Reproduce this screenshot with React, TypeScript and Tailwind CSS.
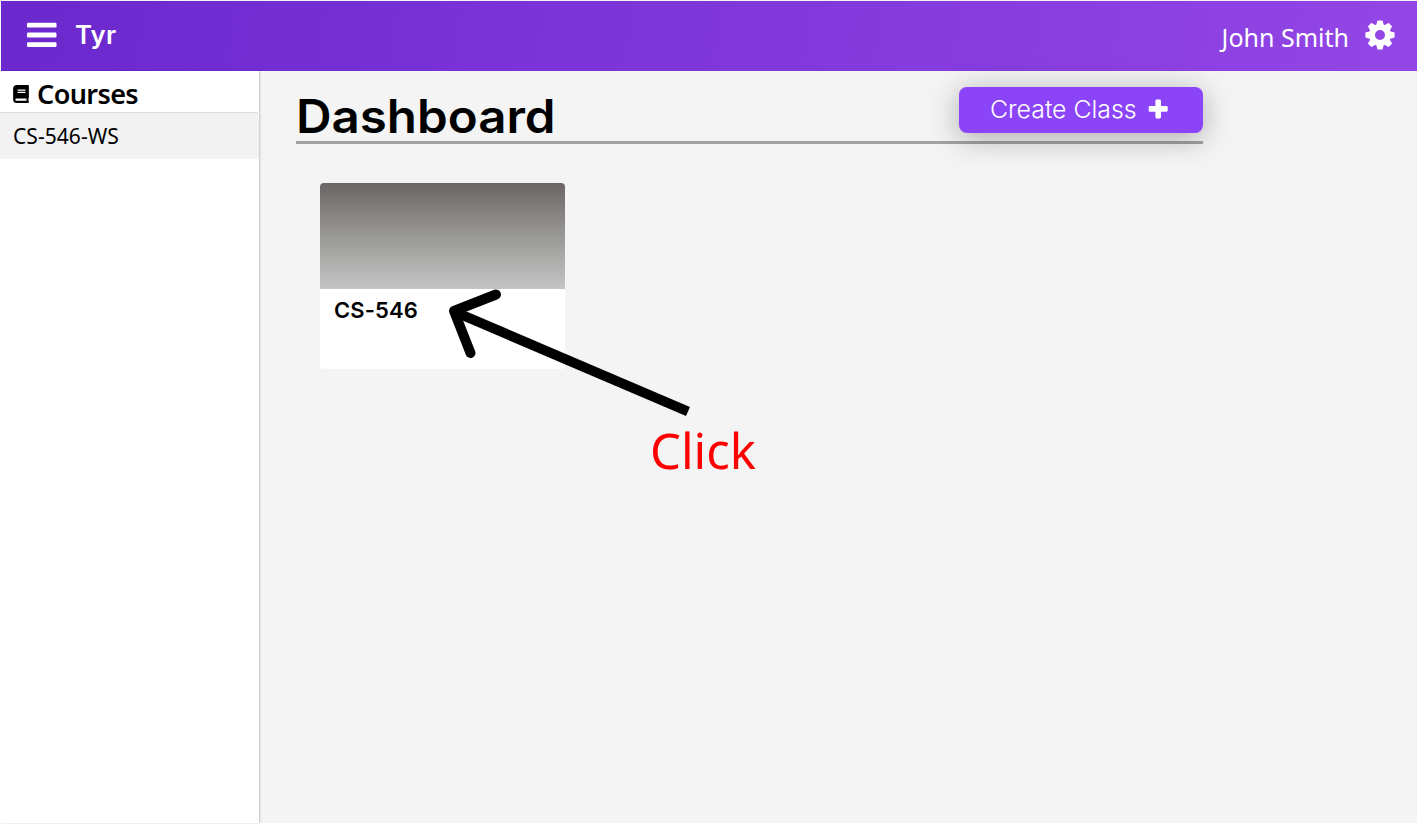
import { FaBook } from "react-icons/fa";

function BarsIcon() {
  return (
    <svg className="size-[30px] shrink-0 -translate-y-px" viewBox="0 0 30 30" fill="currentColor">
      <rect x="0" y="2.8" width="29.5" height="4.8" rx="1.2" />
      <rect x="0" y="12.6" width="29.5" height="4.8" rx="1.2" />
      <rect x="0" y="22.2" width="29.5" height="4.8" rx="1.2" />
    </svg>
  );
}

function PlusIcon() {
  return (
    <svg className="ml-3 size-5 shrink-0 -translate-y-px" viewBox="0 0 20 20" fill="currentColor">
      <rect x="0.7" y="7.1" width="19" height="5.6" rx="1.3" />
      <rect x="7.4" y="0.4" width="5.6" height="19" rx="1.3" />
    </svg>
  );
}

const toothAngles = [0, 45, 90, 135, 180, 225, 270, 315];

function GearIcon() {
  return (
    <svg className="ml-4 size-[30px] shrink-0 -translate-y-px" viewBox="-15 -15 30 30" fill="currentColor">
      <circle r="8" fill="none" stroke="currentColor" strokeWidth="6" />
      {toothAngles.map((angle) => (
        <path
          key={angle}
          transform={`rotate(${angle})`}
          d="M-3.8 -9.5 L-2.7 -14 Q-2.6 -14.6 -2 -14.6 H2 Q2.6 -14.6 2.7 -14 L3.8 -9.5 Z"
        />
      ))}
    </svg>
  );
}

function Header() {
  return (
    <header className="ml-px mt-px flex h-[70px] shrink-0 items-center bg-linear-[100deg,#6a28cd,#9446e6] pl-[26px] pr-[22px] text-white">
      <BarsIcon />
      <span className="ml-[18px] origin-left scale-x-[1.03] font-['Inter',sans-serif] text-[25px] leading-[32px] font-semibold tracking-[0.2px] -translate-y-px">
        Tyr
      </span>
      <span className="ml-auto font-['Noto_Sans',sans-serif] text-[25px] leading-[32px] whitespace-nowrap translate-y-px">
        John Smith
      </span>
      <GearIcon />
    </header>
  );
}

function Sidebar() {
  return (
    <aside className="z-10 w-[259px] shrink-0 bg-white shadow-[1px_0_2px_rgba(0,0,0,0.2)]">
      <div className="mr-px flex h-[42px] items-center border-b border-[#dcdcdc] pl-[13px] pt-[5px]">
        <FaBook className="h-[18px] w-[16px]" />
        <h2 className="ml-2 origin-left font-['Noto_Sans',sans-serif] text-[27px] leading-[36px] font-semibold tracking-[-0.6px]">
          Courses
        </h2>
      </div>
      <div className="flex h-[46px] items-center bg-[#f2f2f2] pl-[13px] pt-[2px] font-['Noto_Sans',sans-serif] text-[21px] tracking-[0.05px]">
        CS-546-WS
      </div>
    </aside>
  );
}

function CourseCard() {
  return (
    <article className="ml-6 mt-[39px] h-[186px] w-[245px] overflow-hidden rounded-[4px] bg-white">
      <div className="h-[106px] bg-linear-to-b from-[#6b6565] via-[#999896] to-[#c5c5c5]" />
      <h3 className="pl-[14px] pt-[6px] font-['Inter',sans-serif] text-[22px] leading-[30px] font-semibold tracking-[0.1px]">
        CS-546
      </h3>
    </article>
  );
}

export default function App() {
  return (
    <div className="relative flex h-[825px] w-[1417px] flex-col overflow-hidden bg-[#f4f4f4] text-black">
      <Header />
      <div className="flex h-[752px] shrink-0">
        <Sidebar />
        <main className="ml-[37px] w-[907px]">
          <div className="flex h-[73px] items-start justify-between border-b-3 border-[#a5a1a1]">
            <h1 className="origin-left scale-x-[1.07] pt-[17px] font-['Inter',sans-serif] text-[46px] leading-[56px] font-semibold">
              Dashboard
            </h1>
            <button className="mt-4 flex h-[46px] w-[244px] items-center rounded-[8px] bg-[#8b44f8] pl-[31px] text-left font-['Inter',sans-serif] text-[24px] font-light whitespace-nowrap text-white shadow-[0_5px_30px_rgba(0,0,0,0.3)]">
              <span className="w-[146px]">
                <span className="inline-block origin-left scale-x-[1.035]">Create Class</span>
              </span>
              <PlusIcon />
            </button>
          </div>
          <CourseCard />
        </main>
      </div>
      <div className="h-[2px] shrink-0 bg-white" />
      <svg className="pointer-events-none absolute left-0 top-0 z-20" width="1417" height="825" fill="none" stroke="#000">
        <path d="M454 311.5 L688 411.5" strokeWidth="10" />
        <path d="M496 294.5 L454 311 L470.5 353" strokeWidth="10" strokeLinecap="round" strokeLinejoin="round" />
      </svg>
      <span className="absolute left-[650px] top-[418px] z-20 font-['Noto_Sans',sans-serif] text-[49px] leading-[64px] text-[#ff0000]">
        Click
      </span>
    </div>
  );
}
